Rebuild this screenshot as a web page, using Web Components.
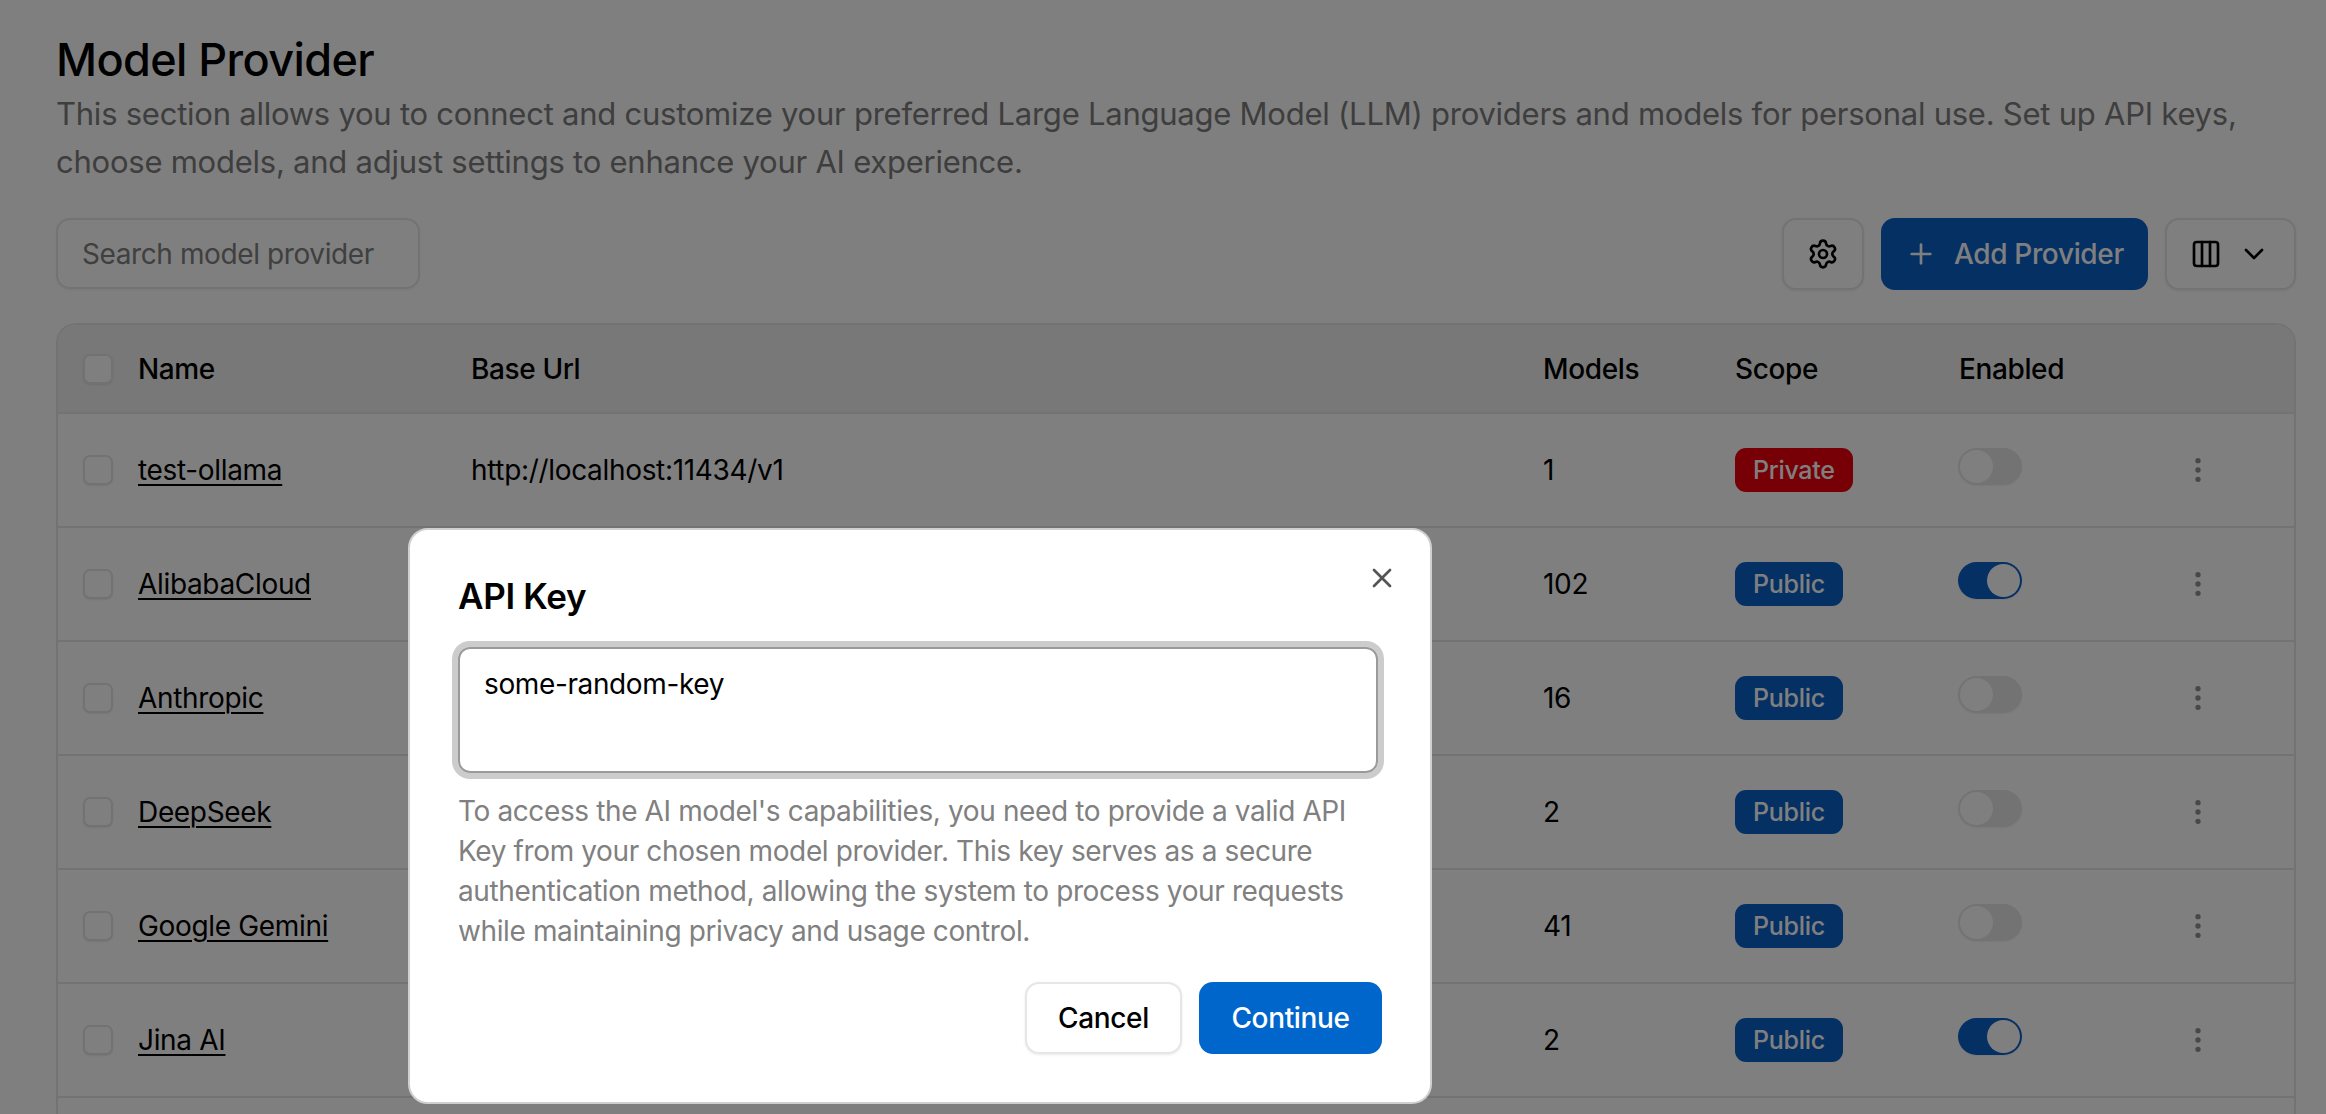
<!DOCTYPE html>
<html lang="en"><head><meta charset="utf-8"><title>Model Provider</title>
<style>
html,body{margin:0;height:1114px;overflow:hidden;background:#fff;font-family:Inter,"Liberation Sans",sans-serif;color:#000}
</style></head><body>
<settings-page></settings-page>
<script>
const icon=(inner,size=32,sw=2)=>`<svg xmlns="http://www.w3.org/2000/svg" width="${size}" height="${size}" viewBox="0 0 24 24" fill="none" stroke="currentColor" stroke-width="${sw}" stroke-linecap="round" stroke-linejoin="round" style="display:block;flex:none">${inner}</svg>`;
const ICONS={
 gear:'<path d="M9.671 4.136a2.34 2.34 0 0 1 4.659 0 2.34 2.34 0 0 0 3.319 1.915 2.34 2.34 0 0 1 2.33 4.033 2.34 2.34 0 0 0 0 3.831 2.34 2.34 0 0 1-2.33 4.033 2.34 2.34 0 0 0-3.319 1.915 2.34 2.34 0 0 1-4.659 0 2.34 2.34 0 0 0-3.32-1.915 2.34 2.34 0 0 1-2.33-4.033 2.34 2.34 0 0 0 0-3.831A2.34 2.34 0 0 1 6.35 6.051a2.34 2.34 0 0 0 3.319-1.915"/><circle cx="12" cy="12" r="3"/>',
 plus:'<path d="M5 12h14"/><path d="M12 5v14"/>',
 cols:'<rect x="3" y="3" width="18" height="18" rx="2"/><path d="M9 3v18"/><path d="M15 3v18"/>',
 chev:'<path d="m6 9 6 6 6-6"/>',
 dots:'<circle cx="12" cy="12" r="1"/><circle cx="12" cy="5" r="1"/><circle cx="12" cy="19" r="1"/>',
 x:'<path d="M18 6 6 18"/><path d="m6 6 12 12"/>'
};
function def(name,html,init){
 customElements.define(name,class extends HTMLElement{
  connectedCallback(){ if(this.shadowRoot) return; const r=this.attachShadow({mode:'open'}); r.innerHTML=typeof html==='function'?html(this):html; init&&init(r,this);} });
}
def('ui-check',`<style>:host{display:block;box-sizing:border-box;width:30px;height:30px;border:2px solid #e4e4e4;border-radius:7px;background:#fff;box-shadow:0 1px 2px rgba(0,0,0,.08)}</style>`);
def('ui-toggle',e=>`<style>
:host{display:flex;box-sizing:border-box;width:64px;height:37px;margin:-7px 0 0 -1px;border-radius:19px;padding:2px;
 background:${e.hasAttribute('on')?'#0a60c8':'#e6e6e6'};justify-content:${e.hasAttribute('on')?'flex-end':'flex-start'};box-shadow:0 1px 2px rgba(0,0,0,.06)}
i{display:block;width:33px;height:33px;border-radius:50%;background:#fff}
</style><i></i>`);
def('ui-badge',e=>`<style>:host{display:inline-flex;align-items:center;height:44px;padding:0 18px;border-radius:11px;font-size:25px;font-weight:500;letter-spacing:-.3px;color:#fff;background:${e.getAttribute('kind')==='Private'?'#ee000e':'#0a60c8'}}</style><slot></slot>`);
def('ui-button',e=>`<style>:host{display:flex;box-sizing:border-box;align-items:center;height:72px;border-radius:14px;font-size:28px;font-weight:450;letter-spacing:-.35px;
 ${e.hasAttribute('primary')?'background:var(--bg,#0a60c8);color:#fff;':'border:2px solid #e6e6e6;background:#fff;color:#000;box-shadow:0 1px 3px rgba(0,0,0,.08);'}}</style><slot></slot>`);
def('provider-row',e=>{const on=e.hasAttribute('on');const s=e.getAttribute('scope');return `<style>
:host{display:grid;box-sizing:border-box;height:114px;border-bottom:2px solid #e6e6e6;padding-left:25px;align-items:center;font-size:28px;letter-spacing:-.33px;
 grid-template-columns:55px 333px 1072px 192px 224px 210px 1fr}
a{color:#000;text-decoration:underline;text-underline-offset:4px;text-decoration-thickness:2px}
.act{padding-left:13px;color:#909090}
</style><ui-check></ui-check><div><a>${e.getAttribute('name')}</a></div><div>${e.getAttribute('url')||''}</div><div>${e.getAttribute('models')}</div>
<div style="height:44px"><ui-badge kind="${s}">${s}</ui-badge></div><ui-toggle ${on?'on':''}></ui-toggle><div class="act">${icon(ICONS.dots)}</div>`});
def('provider-table',`<style>
:host{display:block;box-sizing:border-box;border:2px solid #e6e6e6;border-bottom:0;border-radius:20px 20px 0 0;height:800px;overflow:hidden;background:#fff}
.h{display:grid;box-sizing:border-box;height:89px;background:#f0f0f0;border-bottom:2px solid #e6e6e6;padding-left:25px;align-items:center;font-size:28px;font-weight:450;letter-spacing:-.38px;
 grid-template-columns:55px 333px 1072px 192px 224px 210px 1fr}
</style><div class="h"><ui-check></ui-check><div>Name</div><div>Base Url</div><div>Models</div><div>Scope</div><div>Enabled</div><div></div></div><slot></slot>`);
def('api-key-modal',`<style>
:host{position:absolute;left:408px;top:528px;box-sizing:border-box;width:1024px;height:576px;background:#fff;border:2px solid #d0d0d0;border-radius:20px;padding:0 48px;display:block;color:#000}
h2{margin:0;padding-top:42px;font-size:35px;line-height:48px;font-weight:600;letter-spacing:-.3px}
.close{position:absolute;left:956px;top:32px;color:#555}
.ta{box-sizing:border-box;height:126px;margin:27px 4px 0 0;border:2px solid #9a9a9a;border-radius:12px;box-shadow:0 0 0 6px #ccc;padding:15px 24px;font-size:28px;line-height:40px;letter-spacing:-.38px}
p{margin:18px 0 0;font-size:28px;line-height:40px;color:#808080;letter-spacing:-.38px}
.b{display:flex;justify-content:flex-end;gap:17px;margin-top:31px}
.c{width:157px;justify-content:center}.d{width:183px;justify-content:center;--bg:#0066cc}
</style>
<h2>API Key</h2><div class="close">${icon(ICONS.x)}</div>
<div class="ta">some-random-key</div>
<p>To access the AI model's capabilities, you need to provide a valid API Key from your chosen model provider. This key serves as a secure authentication method, allowing the system to process your requests while maintaining privacy and usage control.</p>
<div class="b"><ui-button class="c">Cancel</ui-button><ui-button primary class="d">Continue</ui-button></div>`);
def('settings-page',`<style>
:host{display:block;box-sizing:border-box;height:1114px;padding:32px 30px 0 56px;overflow:hidden;position:relative}
h1{margin:0;font-size:45px;line-height:56px;font-weight:500;letter-spacing:-.6px}
.sub{margin:2px 0 0;font-size:31px;line-height:48px;color:#7c7c7c;letter-spacing:-.24px}
.tb{display:flex;align-items:flex-start;margin:32px 0 33px;gap:17px}
.search{box-sizing:border-box;width:364px;height:71px;border:2px solid #e6e6e6;border-radius:14px;padding:0 24px;display:flex;align-items:center;font-size:28px;letter-spacing:-.4px;color:#808080;margin-right:auto;box-shadow:0 1px 3px rgba(0,0,0,.06)}
.g{width:82px;justify-content:center}
.add{width:267px;padding:0 0 0 24px;gap:17px;--bg:#0a60c8}
.cols{width:131px;padding-left:23px;gap:16px}
.ov{position:fixed;inset:0;background:rgba(0,0,0,.5)}
</style>
<h1>Model Provider</h1>
<p class="sub">This section allows you to connect and customize your preferred Large Language Model (LLM) providers and models for personal use. Set up API keys, choose models, and adjust settings to enhance your AI experience.</p>
<div class="tb"><div class="search">Search model provider</div>
<ui-button class="g">${icon(ICONS.gear)}</ui-button>
<ui-button primary class="add">${icon(ICONS.plus)}<span>Add Provider</span></ui-button>
<ui-button class="cols">${icon(ICONS.cols)}${icon(ICONS.chev)}</ui-button></div>
<provider-table>
<provider-row name="test-ollama" url="http://localhost:11434/v1" models="1" scope="Private"></provider-row>
<provider-row name="AlibabaCloud" models="102" scope="Public" on></provider-row>
<provider-row name="Anthropic" models="16" scope="Public"></provider-row>
<provider-row name="DeepSeek" models="2" scope="Public"></provider-row>
<provider-row name="Google Gemini" models="41" scope="Public"></provider-row>
<provider-row name="Jina AI" models="2" scope="Public" on></provider-row>
</provider-table>
<div class="ov"></div>
<api-key-modal></api-key-modal>`);
</script>
</body></html>
